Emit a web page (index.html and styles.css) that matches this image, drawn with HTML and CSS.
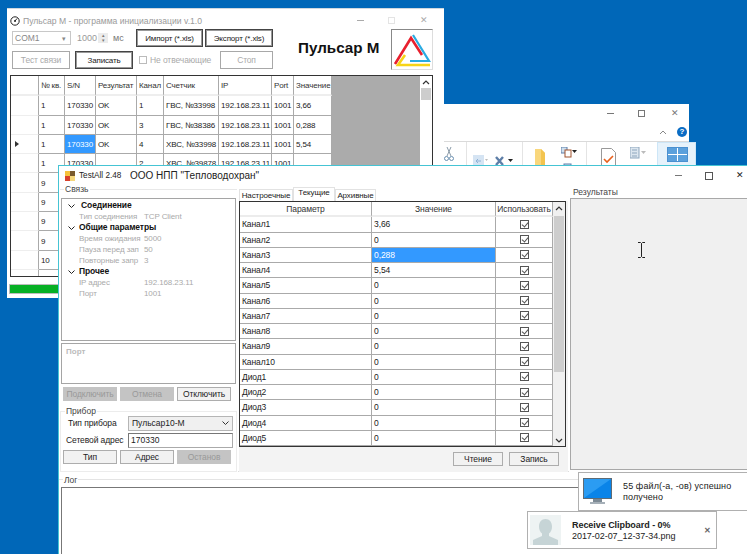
FILE: index.html
```html
<!DOCTYPE html>
<html lang="ru">
<head>
<meta charset="utf-8">
<title>Пульсар М</title>
<link rel="stylesheet" href="styles.css">
</head>
<body>
<div class="desktop">

  <section class="win explorer">
    <div class="ex-controls">
      <span class="ctl-min"></span><span class="ctl-max"></span><span class="ctl-close">✕</span>
    </div>
    <div class="ex-help">
      <svg class="ex-chev" width="8" height="5" viewBox="0 0 8 5"><path d="M1 4l3-3 3 3" fill="none" stroke="#888"/></svg>
      <span class="ex-q">?</span>
    </div>
    <div class="ex-ribbon">
      <svg class="ex-i1" width="10" height="15" viewBox="0 0 10 15"><path d="M3 0l4 9M7 0L3 9" stroke="#8a9aa8" fill="none"/><circle cx="2.5" cy="11.5" r="2" fill="none" stroke="#6a8fb0"/><circle cx="7.5" cy="11.5" r="2" fill="none" stroke="#6a8fb0"/></svg>
      <span class="ex-sep s1"></span>
      <svg class="ex-i2" width="15" height="12" viewBox="0 0 15 12"><rect width="11" height="12" fill="#d5e4f3"/><path d="M3 6h5M3 6l2-2M3 6l2 2" stroke="#8fb2d6" fill="none"/><path d="M12 4h3l-1.500 2z" fill="#bbb"/></svg>
      <svg class="ex-i3" width="18" height="10" viewBox="0 0 18 10"><path d="M1 1l7 8M8 1L1 9" stroke="#5e7fa8" stroke-width="2.400"/><path d="M13 3h5l-2.500 3z" fill="#222"/></svg>
      <span class="ex-sep s2"></span>
      <svg class="ex-i4" width="13" height="18" viewBox="0 0 13 18"><path d="M1 0h6l4 4v14H1z" fill="#f9d77c"/><path d="M7 0l4 4v14H7z" fill="#f3c44f"/></svg>
      <svg class="ex-i5" width="16" height="22" viewBox="0 0 16 22"><rect width="6" height="6" fill="#cfe0ef" stroke="#5e7fa8"/><rect x="4" y="3" width="6" height="7" fill="#fff" stroke="#a0522d"/><path d="M11 3h5l-2.500 3z" fill="#222"/><rect x="3" y="17" width="7" height="5" fill="#cfe0ef" stroke="#5e7fa8"/></svg>
      <span class="ex-sep s3"></span>
      <svg class="ex-i6" width="15" height="22" viewBox="0 0 15 22"><path d="M.5.5h10l4 4v17H.5z" fill="#fff" stroke="#999"/><path d="M3 11l3 3 6-6" fill="none" stroke="#e8601c" stroke-width="1.600"/></svg>
      <svg class="ex-i7" width="16" height="20" viewBox="0 0 16 20"><rect width="9" height="11" fill="#dce6ef" stroke="#8ea6bd"/><path d="M2 3h5M2 6h5M2 9h5" stroke="#8ea6bd"/><path d="M11 4h5l-2.500 3z" fill="#bbb"/></svg>
      <div class="ex-tile"><span class="ex-grid"><i></i><i></i><i></i><i></i></span></div>
    </div>
  </section>

  <section class="win pulsar">
    <header class="a-title">
      <svg width="10" height="10" viewBox="0 0 10 10"><circle cx="5" cy="5" r="4.200" fill="none" stroke="#222"/><path d="M5 5l2-2.500" stroke="#222"/><circle cx="5" cy="5" r="1" fill="#222"/></svg>
      <span class="a-title-text">Пульсар М - программа инициализации v.1.0</span>
      <span class="a-controls"><span class="ctl-min light"></span><span class="ctl-max light"></span><span class="ctl-close light">✕</span></span>
    </header>
    <div class="a-tools">
      <div class="a-form">
        <div class="a-row r1">
          <div class="a-combo">COM1<span class="caret">▾</span></div>
          <span class="a-num">1000</span>
          <span class="a-spin"><i>▴</i><i>▾</i></span>
          <span class="a-unit">мс</span>
          <button class="btn strong imp">Импорт (*.xls)</button>
          <button class="btn strong exp">Экспорт (*.xls)</button>
        </div>
        <div class="a-row r2">
          <button class="btn off test">Тест связи</button>
          <button class="btn strong wr">Записать</button>
          <span class="a-check"></span>
          <span class="a-check-label">Не отвечающие</span>
          <button class="btn off stop">Стоп</button>
        </div>
      </div>
      <div class="a-brand">Пульсар М</div>
      <div class="a-logo">
        <svg width="40" height="39" viewBox="0 0 40 39"><path d="M3 34L19 8l11 17" fill="none" stroke="#e8202e" stroke-width="2.600"/><path d="M21 5l16 26H18" fill="none" stroke="#29abe2" stroke-width="2.200"/><path d="M13 25L6 35h32" fill="none" stroke="#f7d417" stroke-width="2.600"/></svg>
      </div>
    </div>
    <div class="a-gridbox">
      <table class="a-table">
        <colgroup><col class="c0"><col class="c1"><col class="c2"><col class="c3"><col class="c4"><col class="c5"><col class="c6"><col class="c7"><col class="c8"></colgroup>
        <tr class="head"><th class="rh"></th><th>№ кв.</th><th>S/N</th><th>Результат</th><th>Канал</th><th>Счетчик</th><th>IP</th><th>Port</th><th>Значение</th></tr>
        <tr><th class="rh"></th><td>1</td><td>170330</td><td>OK</td><td>1</td><td>ГВС, №33998</td><td>192.168.23.11</td><td>1001</td><td>3,66</td></tr>
        <tr><th class="rh"></th><td>1</td><td>170330</td><td>OK</td><td>3</td><td>ГВС, №38386</td><td>192.168.23.11</td><td>1001</td><td>0,288</td></tr>
        <tr><th class="rh"><span class="marker"></span></th><td>1</td><td class="sel">170330</td><td>OK</td><td>4</td><td>ХВС, №33998</td><td>192.168.23.11</td><td>1001</td><td>5,54</td></tr>
        <tr><th class="rh"></th><td>1</td><td>170330</td><td></td><td>2</td><td>ХВС, №39878</td><td>192.168.23.11</td><td>1001</td><td></td></tr>
        <tr><th class="rh"></th><td>9</td><td></td><td></td><td></td><td></td><td></td><td></td><td></td></tr>
        <tr><th class="rh"></th><td>9</td><td></td><td></td><td></td><td></td><td></td><td></td><td></td></tr>
        <tr><th class="rh"></th><td>9</td><td></td><td></td><td></td><td></td><td></td><td></td><td></td></tr>
        <tr><th class="rh"></th><td>9</td><td></td><td></td><td></td><td></td><td></td><td></td><td></td></tr>
        <tr><th class="rh"></th><td>10</td><td></td><td></td><td></td><td></td><td></td><td></td><td></td></tr>
        <tr><th class="rh"></th><td></td><td></td><td></td><td></td><td></td><td></td><td></td><td></td></tr>
      </table>
      <div class="a-empty"></div>
      <div class="scroll a-scroll">
        <svg class="sc-up" width="8" height="5" viewBox="0 0 8 5"><path d="M1 4l3-3 3 3" fill="none" stroke="#333" stroke-width="1.200"/></svg>
        <span class="sc-thumb"></span>
      </div>
    </div>
    <div class="a-progress"><span class="a-progress-fill"></span></div>
  </section>

  <section class="win testall">
    <header class="b-title">
      <svg width="10" height="10" viewBox="0 0 10 10"><rect width="5" height="5" fill="#f6c23c"/><rect x="5" y="0" width="5" height="5" fill="#7a5a2c"/><rect y="5" width="5" height="5" fill="#d8402c"/><rect x="5" y="5" width="5" height="5" fill="#f6d77c"/></svg>
      <span class="b-name">TestAll 2.48</span>
      <span class="b-org">ООО НПП "Тепловодохран"</span>
      <span class="b-controls"><span class="ctl-min"></span><span class="ctl-max dark"></span><span class="ctl-close dark">✕</span></span>
    </header>
    <div class="b-main">
      <div class="b-left">
        <div class="group g-link">
          <div class="legend">Связь</div>
          <div class="props">
            <div class="p-head first"><svg class="chev" width="7" height="4" viewBox="0 0 7 4"><path d="M.5.500l3 3 3-3" fill="none" stroke="#222"/></svg><b>Соединение</b></div>
            <div class="p-row"><span>Тип соединения</span><span>TCP Client</span></div>
            <div class="p-head"><svg class="chev" width="7" height="4" viewBox="0 0 7 4"><path d="M.5.500l3 3 3-3" fill="none" stroke="#222"/></svg><b>Общие параметры</b></div>
            <div class="p-row"><span>Время ожидания</span><span>5000</span></div>
            <div class="p-row"><span>Пауза перед зап</span><span>50</span></div>
            <div class="p-row"><span>Повторные запр</span><span>3</span></div>
            <div class="p-head"><svg class="chev" width="7" height="4" viewBox="0 0 7 4"><path d="M.5.500l3 3 3-3" fill="none" stroke="#222"/></svg><b>Прочее</b></div>
            <div class="p-row"><span>IP адрес</span><span>192.168.23.11</span></div>
            <div class="p-row"><span>Порт</span><span>1001</span></div>
          </div>
          <div class="port-box"><b>Порт</b></div>
          <div class="btn-row">
            <button class="wbtn dis">Подключить</button>
            <button class="wbtn dis">Отмена</button>
            <button class="wbtn">Отключить</button>
          </div>
        </div>
        <div class="group g-dev">
          <div class="legend">Прибор</div>
          <div class="dev-row"><label class="l1">Тип прибора</label><div class="dev-combo">Пульсар10-М<svg width="7" height="4" viewBox="0 0 7 4"><path d="M.5.500l3 3 3-3" fill="none" stroke="#333"/></svg></div></div>
          <div class="dev-row"><label class="l2">Сетевой адрес</label><div class="dev-input">170330</div></div>
          <div class="btn-row dev-btns">
            <button class="wbtn">Тип</button>
            <button class="wbtn">Адрес</button>
            <button class="wbtn dis">Останов</button>
          </div>
        </div>
      </div>
      <div class="b-mid">
        <div class="tabs"><span class="tab t1">Настроечные</span><span class="tab active t2">Текущие</span><span class="tab t3">Архивные</span></div>
        <div class="page">
          <div class="b-gridbox">
            <table class="b-table">
              <colgroup><col class="d0"><col class="d1"><col class="d2"></colgroup>
              <tr class="head"><th>Параметр</th><th>Значение</th><th>Использовать</th></tr>
              <tr><td>Канал1</td><td>3,66</td><td class="ck"><span class="chk"></span></td></tr>
              <tr><td>Канал2</td><td>0</td><td class="ck"><span class="chk"></span></td></tr>
              <tr><td>Канал3</td><td class="sel">0,288</td><td class="ck"><span class="chk"></span></td></tr>
              <tr><td>Канал4</td><td>5,54</td><td class="ck"><span class="chk"></span></td></tr>
              <tr><td>Канал5</td><td>0</td><td class="ck"><span class="chk"></span></td></tr>
              <tr><td>Канал6</td><td>0</td><td class="ck"><span class="chk"></span></td></tr>
              <tr><td>Канал7</td><td>0</td><td class="ck"><span class="chk"></span></td></tr>
              <tr><td>Канал8</td><td>0</td><td class="ck"><span class="chk"></span></td></tr>
              <tr><td>Канал9</td><td>0</td><td class="ck"><span class="chk"></span></td></tr>
              <tr><td>Канал10</td><td>0</td><td class="ck"><span class="chk"></span></td></tr>
              <tr><td>Диод1</td><td>0</td><td class="ck"><span class="chk"></span></td></tr>
              <tr><td>Диод2</td><td>0</td><td class="ck"><span class="chk"></span></td></tr>
              <tr><td>Диод3</td><td>0</td><td class="ck"><span class="chk"></span></td></tr>
              <tr><td>Диод4</td><td>0</td><td class="ck"><span class="chk"></span></td></tr>
              <tr><td>Диод5</td><td>0</td><td class="ck"><span class="chk"></span></td></tr>
            </table>
            <div class="scroll b-scroll">
              <svg class="sc-up" width="8" height="5" viewBox="0 0 8 5"><path d="M1 4l3-3 3 3" fill="none" stroke="#333" stroke-width="1.200"/></svg>
              <span class="sc-thumb"></span>
              <svg class="sc-down" width="8" height="5" viewBox="0 0 8 5"><path d="M1 1l3 3 3-3" fill="none" stroke="#333" stroke-width="1.200"/></svg>
            </div>
          </div>
          <div class="page-btns"><button class="wbtn">Чтение</button><button class="wbtn">Запись</button></div>
        </div>
      </div>
      <div class="b-right">
        <div class="legend">Результаты</div>
        <div class="results"><svg class="ibeam" width="7" height="16" viewBox="0 0 7 16"><path d="M0 .5h2.500l1 1 1-1H7M0 15.500h2.500l1-1 1 1H7M3.500 1.500v13" fill="none" stroke="#222"/></svg></div>
      </div>
    </div>
    <div class="b-log">
      <div class="legend">Лог</div>
      <div class="log-box"></div>
    </div>
  </section>

  <aside class="toast toast-a">
    <svg width="29" height="27" viewBox="0 0 29 27"><rect width="29" height="21" fill="#5f6b75"/><rect x="1" y="1" width="27" height="19" fill="#0a84e8"/><path d="M1 20L28 1H1z" fill="#2b9cf2"/><rect x="10" y="21" width="9" height="3" fill="#7d8a94"/><rect x="7" y="24" width="15" height="2" fill="#a6b0b8"/></svg>
    <p>55 файл(-а, -ов) успешно получено</p>
  </aside>
  <aside class="toast toast-b">
    <div class="avatar"><svg width="31" height="30" viewBox="0 0 31 30"><path d="M15.500 4c4 0 6.500 3 6.500 7.500 0 3-1 5.500-3 7v2.500l9 4v5H3v-5l9-4v-2.500c-2-1.500-3-4-3-7C9 7 11.500 4 15.500 4z" fill="#c6d4d6"/></svg></div>
    <div class="toast-text"><b>Receive Clipboard - 0%</b><span>2017-02-07_12-37-34.png</span></div>
    <span class="toast-x">✕</span>
  </aside>
</div>
</body>
</html>
```

FILE: styles.css
```css
* { box-sizing: border-box; }
html, body { margin: 0; padding: 0; }
body { font-family: "Liberation Sans", Arial, sans-serif; font-size: 8px; color: #222; }
.desktop { position: relative; width: 747px; height: 554px; overflow: hidden; background: #0067b8; }
.win { position: absolute; background: #fff; }
button { font: inherit; margin: 0; padding: 0; }

/* window controls */
.ctl-min { display: block; width: 7px; height: 1px; background: #777; }
.ctl-max { display: block; width: 7px; height: 7px; border: 1px solid #777; }
.ctl-max.light { border-color: #e4e4e4; }
.ctl-max.dark { width: 8px; height: 8px; border-color: #555; }
.ctl-close { display: block; font-size: 9px; line-height: 9px; color: #777; }
.ctl-close.dark { color: #222; }
.ctl-min.light { background: #aaa; }
.ctl-close.light { color: #aaa; }

/* explorer */
.explorer { left: 430px; top: 104px; width: 259px; height: 70px; z-index: 1; }
.ex-controls { display: flex; align-items: center; height: 19px; padding-left: 177px; }
.ex-controls .ctl-max { margin-left: 24px; }
.ex-controls .ctl-close { margin-left: 26px; }
.ex-help { display: flex; align-items: center; justify-content: flex-end; height: 18px; gap: 10px; padding: 0 2px 0 0; }
.ex-q { width: 10px; height: 10px; border-radius: 50%; background: #0a6cc4; color: #fff; font-size: 8px; line-height: 10px; font-weight: bold; text-align: center; }
.ex-ribbon { display: flex; align-items: flex-start; height: 33px; border-top: 1px solid #dadada; padding-left: 14px; }
.ex-ribbon svg { flex: none; margin-top: 5px; }
.ex-sep { flex: none; width: 1px; height: 30px; background: #e4e4e4; }
.s1 { margin-left: 12px; }
.ex-ribbon .ex-i2 { margin: 13px 0 0 6px; }
.ex-ribbon .ex-i3 { margin: 14px 0 0 7px; }
.s2 { margin-left: 9px; }
.ex-ribbon .ex-i4 { margin: 7px 0 0 11px; }
.ex-ribbon .ex-i5 { margin: 5px 0 0 14px; }
.s3 { margin-left: 9px; }
.ex-ribbon .ex-i6 { margin: 6px 0 0 14px; }
.ex-ribbon .ex-i7 { margin: 5px 0 0 14px; }
.ex-tile { flex: none; width: 39px; height: 30px; margin-left: 11px; background: #e6f2fb; border: 1px solid #cde6f7; padding: 4px 0 0 9px; }
.ex-grid { display: grid; grid-template-columns: 9px 9px; grid-auto-rows: 6px; gap: 1px; width: 21px; height: 15px; border: 1px solid #4a90d0; background: #fff; }
.ex-grid i { background: #5aa0dc; }

/* pulsar window */
.pulsar { left: 7px; top: 8px; width: 437px; height: 290px; z-index: 2; border-top: 1px solid #cfd8df; }
.a-title { display: flex; align-items: center; height: 17px; padding-left: 3px; margin-top: 3px; }
.a-title svg { flex: none; }
.a-title-text { margin-left: 3px; font-size: 8.600px; color: #9a9a9a; }
.a-controls { display: flex; align-items: center; margin-left: auto; padding-right: 16px; }
.a-controls .ctl-max { margin-left: 24px; }
.a-controls .ctl-close { margin-left: 25px; }
.a-tools { display: flex; align-items: flex-start; height: 47px; padding-left: 5px; }
.a-form { flex: none; width: 261px; }
.a-row { display: flex; align-items: center; }
.r1 { height: 18px; }
.r2 { height: 18px; margin-top: 4px; }
.a-combo { position: relative; width: 59px; height: 14px; padding-left: 2px; line-height: 13px; color: #888; border: 1px solid #c8c8c8; font-size: 8.500px; }
.caret { position: absolute; right: 4px; top: 0; font-size: 7px; color: #888; }
.a-num { margin-left: 6px; width: 21px; font-size: 9px; color: #999; }
.a-spin { display: flex; flex-direction: column; width: 10px; height: 10px; background: #ececec; font-size: 5px; line-height: 5px; text-align: center; color: #777; }
.a-spin i { font-style: normal; }
.a-unit { margin-left: 5px; width: 23px; color: #777; font-size: 9px; }
.btn { height: 18px; background: #fff; letter-spacing: -.15px; }
.btn.strong { border: 1px solid #444; box-shadow: inset 0 0 0 1px #999; color: #222; }
.btn.off { border: 1px solid #a8a8a8; color: #aaa; font-size: 8.500px; }
.imp { width: 67px; }
.exp { width: 68px; margin-left: 2px; }
.test { width: 58px; }
.wr { width: 58px; margin-left: 5px; }
.a-check { width: 8px; height: 8px; margin-left: 6px; border: 1px solid #bbb; }
.a-check-label { width: 70px; margin-left: 3px; color: #aaa; font-size: 8.500px; letter-spacing: -.1px; }
.stop { width: 53px; }
.a-brand { flex: none; width: 93px; margin: 10px 0 0 25px; font-size: 15.200px; font-weight: bold; color: #111; white-space: nowrap; }
.a-logo { flex: none; width: 42px; height: 41px; border: 1px solid #bbb; border-color: #888 #ddd #ddd #888; }
.a-logo svg { display: block; }

.a-gridbox { display: flex; width: 423px; height: 202px; margin-left: 3px; margin-top: -1px; overflow: hidden; border: 1px solid #333; }
.a-table { flex: none; align-self: flex-start; width: 321px; table-layout: fixed; border-collapse: separate; border-spacing: 0; }
.c0 { width: 28px; } .c1 { width: 26px; } .c2 { width: 31px; } .c3 { width: 41px; } .c4 { width: 27px; }
.c5 { width: 55px; } .c6 { width: 53px; } .c7 { width: 22px; } .c8 { width: 38px; }
.a-table tr { height: 19.300px; }
.a-table tr.head { height: 20.300px; }
.a-table td, .a-table th { padding: 1px 0 0 2px; border-right: 1px solid #aaa; border-bottom: 1px solid #aaa; font-weight: normal; text-align: left; white-space: nowrap; overflow: hidden; letter-spacing: -.12px; }
.a-table .rh { border-bottom: 1px solid #eee; padding: 0 0 0 4px; }
.a-table .head th { border-bottom: 2px solid #eee; color: #333; }
.marker { display: inline-block; border-left: 4px solid #333; border-top: 3px solid transparent; border-bottom: 3px solid transparent; }
.sel { background: #3399ff; color: #fff; }
.a-table td.sel, .b-table td.sel { color: #fff; }
.a-empty { flex: 1; background: #ababab; }
.scroll { flex: none; display: flex; flex-direction: column; align-items: center; background: #f0f0f0; }
.a-scroll { width: 12px; background: #fff; }
.sc-up { flex: none; margin-top: 4px; }
.a-scroll .sc-thumb { width: 10px; height: 12px; margin-top: 3px; background: #cdcdcd; }
.a-progress { width: 50px; height: 10px; margin: 7px 0 0 2px; border: 1px solid #bcbcbc; }
.a-progress-fill { display: block; height: 100%; background: #06b025; }

/* testall window */
.testall { left: 58px; top: 165px; width: 689px; height: 389px; z-index: 3; border-top: 1px solid #45c4d4; border-left: 1px solid #45c4d4; }
.b-title { display: flex; align-items: center; height: 19px; padding-left: 6px; color: #222; }
.b-title svg { flex: none; }
.b-name { margin-left: 4px; width: 51px; font-size: 8.200px; }
.b-org { font-size: 10px; }
.b-controls { display: flex; align-items: center; margin-left: auto; padding-right: 3px; }
.b-controls .ctl-max { margin-left: 23px; }
.b-controls .ctl-close { margin-left: 23px; }

.b-main { display: flex; align-items: flex-start; height: 287px; }
.legend { width: fit-content; margin: -6px 0 0 4px; padding: 0 1px; background: #fff; font-size: 8.500px; line-height: 10px; color: #444; }
.group { border: 1px solid #e8e8e8; }
.b-left { flex: none; width: 179px; padding: 4px 0 0 1px; }
.g-link { width: 177px; height: 216px; border-width: 1px 0 0 0; }
.props { height: 143px; width: 175px; margin: 4px 0 0 1px; padding-top: 1px; border: 1px solid #a5a5a5; }
.p-row, .p-head { display: flex; height: 11px; line-height: 11px; white-space: nowrap; font-size: 8px; }
.p-row { padding-left: 17px; color: #aaa; letter-spacing: -.1px; }
.p-row span:first-child { width: 62px; margin-right: 3px; overflow: hidden; }
.p-head { align-items: center; padding-left: 6px; color: #111; font-size: 8.500px; }
.p-head b { margin-left: 4px; letter-spacing: -.1px; }
.p-head.first b { margin-left: 6px; }
.chev { flex: none; }
.port-box { width: 175px; height: 41px; margin: 2px 0 0 1px; padding: 3px 0 0 4px; border: 1px solid #a5a5a5; color: #bbb; font-size: 8px; }
.btn-row { display: flex; gap: 3px; margin: 3px 0 0 3px; }
.wbtn { width: 54px; height: 14px; background: #f2f2f2; border: 1px solid #adadad; color: #222; font-size: 8.500px; line-height: 11px; letter-spacing: -.1px; }
.wbtn.dis { background: #c4c4c4; border-color: #c4c4c4; color: #999; }
.g-dev { width: 177px; height: 61px; margin-top: 6px; border: 1px solid #ececec; }
.dev-row { display: flex; align-items: center; height: 16px; margin-top: 1px; }
.g-dev .legend + .dev-row { margin-top: -1px; }
.dev-row label { width: 67px; font-size: 8.500px; color: #222; letter-spacing: -.1px; white-space: nowrap; }
.l1 { padding-left: 7px; }
.l2 { padding-left: 5px; }
.dev-combo { display: flex; align-items: center; justify-content: space-between; width: 105px; height: 15px; padding: 0 3px; background: #f0f0f0; border: 1px solid #b5b5b5; font-size: 8.500px; }
.dev-input { width: 105px; height: 15px; padding: 0 2px; line-height: 12px; background: #fff; border: 1px solid #888; border-color: #777 #aaa #aaa #777; font-size: 8.500px; }
.btn-row.dev-btns { margin-top: 2px; margin-left: 2px; }

.b-mid { flex: none; width: 331px; height: 287px; padding: 2px 0 0 1px; border-bottom: 1px solid #ddd; }
.tabs { display: flex; height: 14px; align-items: flex-end; }
.tab { height: 12px; line-height: 11px; text-align: center; font-size: 8px; border: 1px solid #e2e2e2; border-bottom: 0; letter-spacing: -.1px; white-space: nowrap; }
.tab.active { height: 14px; line-height: 10px; background: #fff; }
.t1 { width: 54px; }
.t2 { width: 42px; }
.t3 { width: 41px; }
.page { width: 329px; height: 271px; background: #f3f3f3; }
.b-gridbox { display: flex; width: 327px; height: 246px; border: 1px solid #333; background: #fff; }
.b-table { flex: none; width: 313px; height: 244px; table-layout: fixed; border-collapse: separate; border-spacing: 0; }
.d0 { width: 132px; } .d1 { width: 124px; } .d2 { width: 57px; }
.b-table tr { height: 15.200px; }
.b-table td, .b-table th { padding: 0 0 0 2px; border-right: 1px solid #aaa; border-bottom: 1px solid #aaa; white-space: nowrap; overflow: hidden; font-size: 8.500px; letter-spacing: -.1px; line-height: 10px; }
.b-table .head th { font-weight: normal; text-align: center; border-bottom: 2px solid #ececec; padding: 0; color: #333; }
.b-table .ck { text-align: center; padding: 0; }
.chk { display: block; position: relative; width: 9px; height: 9px; margin: 0 auto; border: 1px solid #555; background: #fff; }
.chk::after { content: ""; position: absolute; left: 2px; top: 0; width: 3px; height: 5px; border: solid #555; border-width: 0 1px 1px 0; transform: rotate(40deg); }
.b-scroll { width: 12px; }
.b-scroll .sc-thumb { width: 10px; height: 156px; margin-top: 5px; background: #cdcdcd; }
.sc-down { flex: none; margin-top: auto; margin-bottom: 3px; }
.page-btns { display: flex; justify-content: flex-end; gap: 6px; margin-top: 5px; padding-right: 9px; }
.page-btns .wbtn { width: 50px; }

.b-right { flex: 1; padding-top: 2px; height: 287px; }
.b-right .legend { margin: 0 0 0 3px; }
.results { height: 272px; margin: 1px 0 0 1px; background: #f0f0f0; border: 1px solid #a8a8a8; border-right: 0; padding: 43px 0 0 67px; }
.ibeam { display: block; }

.b-log { margin-top: 7px; border-top: 1px solid #e4e4e4; }
.b-log .legend { margin: -5px 0 0 4px; }
.log-box { height: 70px; margin: 2px 0 0 2px; border: 1px solid #777; border-width: 1px 0 0 1px; background: #fff; }

/* toasts */
.toast { position: absolute; z-index: 4; background: #fff; border: 1px solid #b0b0b0; }
.toast-a { left: 578px; top: 472px; width: 169px; height: 39px; display: flex; align-items: flex-start; padding: 5px 0 0 4px; border-right: 0; }
.toast-a svg { flex: none; }
.toast-a p { margin: 3px 0 0 11px; width: 110px; font-size: 9px; line-height: 10.500px; letter-spacing: .12px; color: #222; }
.toast-b { left: 527px; top: 511px; width: 190px; height: 38px; display: flex; align-items: flex-start; padding: 3px 0 0 2px; }
.avatar { flex: none; width: 31px; height: 30px; background: #eef3f3; }
.avatar svg { display: block; }
.toast-text { display: flex; flex-direction: column; margin: 5px 0 0 11px; font-size: 9px; line-height: 11px; letter-spacing: -.05px; color: #222; }
.toast-text b { font-weight: bold; }
.toast-x { margin: 11px 0 0 auto; padding-right: 5px; font-size: 8px; font-weight: bold; color: #666; }
```
